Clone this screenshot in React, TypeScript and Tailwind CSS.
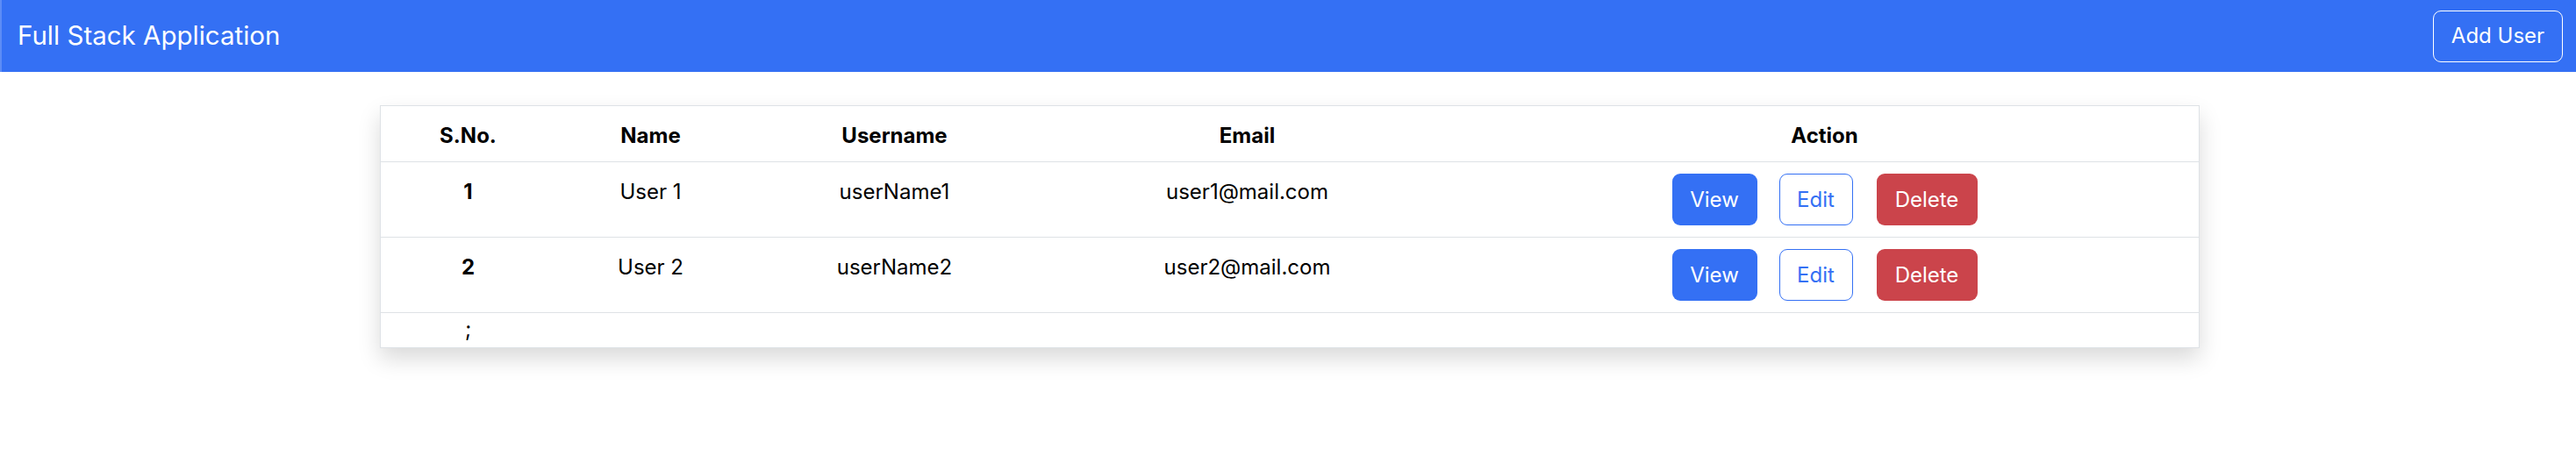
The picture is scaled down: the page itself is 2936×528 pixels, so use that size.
const users = [
  { id: 1, name: "User 1", username: "userName1", email: "user1@mail.com" },
  { id: 2, name: "User 2", username: "userName2", email: "user2@mail.com" },
];

const cols = "grid grid-cols-[200px_216px_340px_464px_1fr] text-center";

const App = () => {
  return (
    <div className="min-h-screen bg-white font-['Inter',sans-serif] text-black">
      <nav className="h-[82px] bg-[#3470f4] border-l-2 border-[#5d8cf6] flex items-center justify-between pl-[18px] pr-[15px]">
        <span className="text-[29.5px] text-white leading-none">Full Stack Application</span>
        <button className="h-[59px] w-[148px] border border-white rounded-[9px] text-[24px] text-white">
          Add User
        </button>
      </nav>

      <div className="pt-[38px] pl-[3px]">
        <div className="w-[2074px] mx-auto border border-[#dee2e6] bg-white shadow-[0_12px_24px_rgba(0,0,0,0.15)]">
          <div className={`${cols} h-[64px] pt-[16px] border-b border-[#dee2e6] font-bold text-[24px] leading-[36px]`}>
            <div>S.No.</div>
            <div>Name</div>
            <div>Username</div>
            <div>Email</div>
            <div>Action</div>
          </div>

          {users.map((user) => (
            <div
              key={user.id}
              className={`${cols} h-[86px] border-b border-[#dee2e6] text-[24px] leading-[36px]`}>
              <div className="pt-[16px] font-bold">{user.id}</div>
              <div className="pt-[16px]">{user.name}</div>
              <div className="pt-[16px]">{user.username}</div>
              <div className="pt-[16px]">{user.email}</div>
              <div className="pt-[13px] flex justify-center">
                <button className="h-[59px] w-[97px] rounded-[9px] bg-[#3470f4] text-white">View</button>
                <button className="h-[59px] w-[84px] ml-[25px] rounded-[9px] border border-[#3470f4] text-[#3470f4]">
                  Edit
                </button>
                <button className="h-[59px] w-[115px] ml-[27px] rounded-[9px] bg-[#cb444b] text-white">
                  Delete
                </button>
              </div>
            </div>
          ))}

          <div className={`${cols} h-[39px] text-[24px] leading-[36px]`}>
            <div className="pt-[1px]">;</div>
          </div>
        </div>
      </div>
    </div>
  );
};

export default App;
